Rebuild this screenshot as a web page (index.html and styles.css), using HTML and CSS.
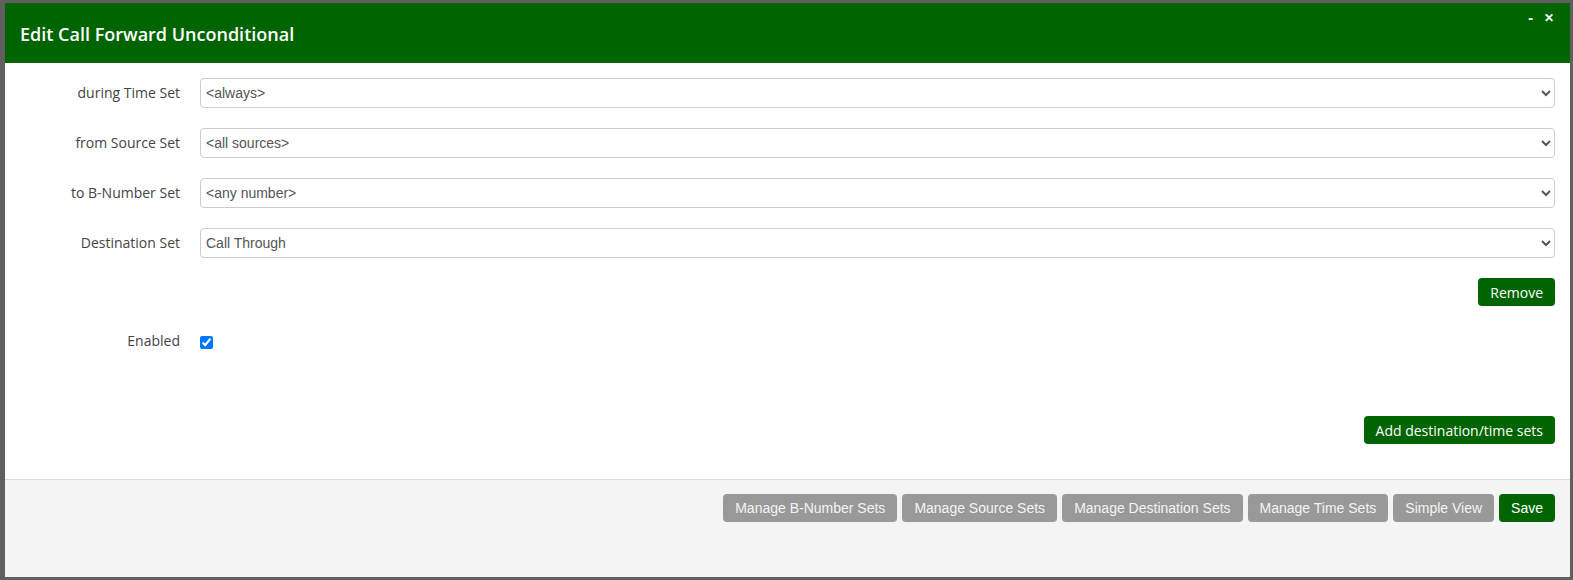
FILE: index.html
```html
<!DOCTYPE html>
<html>
<head>
<meta charset="utf-8">
<link rel="stylesheet" href="styles.css">
</head>
<body>
<div class="dialog">
  <div class="header">
    <span class="title">Edit Call Forward Unconditional</span>
    <div class="header-tools">
      <span class="tool-min">-</span>
      <span class="tool-close">✕</span>
    </div>
  </div>
  <div class="content">
    <div class="form-row">
      <label class="row-label">during Time Set</label>
      <select class="field"><option>&lt;always&gt;</option></select>
    </div>
    <div class="form-row">
      <label class="row-label">from Source Set</label>
      <select class="field"><option>&lt;all sources&gt;</option></select>
    </div>
    <div class="form-row">
      <label class="row-label">to B-Number Set</label>
      <select class="field"><option>&lt;any number&gt;</option></select>
    </div>
    <div class="form-row">
      <label class="row-label">Destination Set</label>
      <select class="field"><option>Call Through</option></select>
    </div>
    <div class="action-row">
      <button class="btn btn-green">Remove</button>
    </div>
    <div class="form-row check-row">
      <label class="row-label">Enabled</label>
      <div><input type="checkbox" class="check" checked></div>
    </div>
    <div class="action-row add-row">
      <button class="btn btn-green">Add destination/time sets</button>
    </div>
  </div>
  <div class="footer">
    <button class="btn btn-gray">Manage B-Number Sets</button>
    <button class="btn btn-gray">Manage Source Sets</button>
    <button class="btn btn-gray">Manage Destination Sets</button>
    <button class="btn btn-gray">Manage Time Sets</button>
    <button class="btn btn-gray">Simple View</button>
    <button class="btn btn-save">Save</button>
  </div>
</div>
</body>
</html>
```

FILE: styles.css
```css
html, body {
  margin: 0;
  padding: 0;
}
body {
  background: #5f5f5f;
  padding: 3px 3px 0 5px;
  height: 580px;
  box-sizing: border-box;
  overflow: hidden;
  font-family: "Open Sans", "Liberation Sans", sans-serif;
}
.dialog {
  width: 1565px;
  height: 574px;
  background: #fff;
  display: flex;
  flex-direction: column;
}
.header {
  height: 60px;
  background: #006400;
  color: #fff;
  display: flex;
  align-items: center;
  padding: 0 15px 0 15px;
  position: relative;
  flex-shrink: 0;
}
.title {
  font-size: 18px;
  font-weight: 600;
  margin-top: 1px;
}
.header-tools {
  position: absolute;
  top: 7px;
  right: 16px;
  display: flex;
  align-items: center;
  gap: 11px;
  font-weight: 700;
}
.tool-min {
  font-size: 15px;
  line-height: 16px;
  margin-top: -3px;
}
.tool-close {
  font-size: 12px;
  line-height: 16px;
}
.content {
  padding: 15px 15px 35px 15px;
  flex-shrink: 0;
}
.form-row {
  display: grid;
  grid-template-columns: 160px 1fr;
  column-gap: 20px;
  align-items: center;
  height: 30px;
  margin-bottom: 20px;
}
.row-label {
  text-align: right;
  font-size: 14px;
  color: #444;
  margin-top: -1px;
}
.field {
  height: 30px;
  border: 1px solid #ccc;
  border-radius: 4px;
  background: #fff;
  font-family: "Liberation Sans", Arial, sans-serif;
  font-size: 14px;
  color: #555;
  padding: 0 0 0 1px;
  width: 100%;
}
.action-row {
  display: flex;
  justify-content: flex-end;
  margin-bottom: 20px;
}
.check-row {
  margin-bottom: 60px;
}
.check {
  margin: 2px 0 0 0;
  width: 13px;
  height: 13px;
  display: block;
}
.add-row {
  margin-bottom: 0;
}
.btn {
  height: 28px;
  border: none;
  border-radius: 4px;
  color: #fff;
  font-size: 14px;
  padding: 0 12px;
  cursor: pointer;
}
.btn-green {
  background: #006400;
  font-family: "Open Sans", sans-serif;
}
.footer {
  flex: 1;
  background: #f4f4f4;
  border-top: 1px solid #ddd;
  display: flex;
  justify-content: flex-end;
  align-items: flex-start;
  gap: 5px;
  padding: 14px 15px 0 15px;
}
.btn-gray {
  background: #999;
  color: #f4f4f4;
  font-family: "Liberation Sans", Arial, sans-serif;
}
.btn-save {
  background: #006400;
  font-family: "Liberation Sans", Arial, sans-serif;
}
```
